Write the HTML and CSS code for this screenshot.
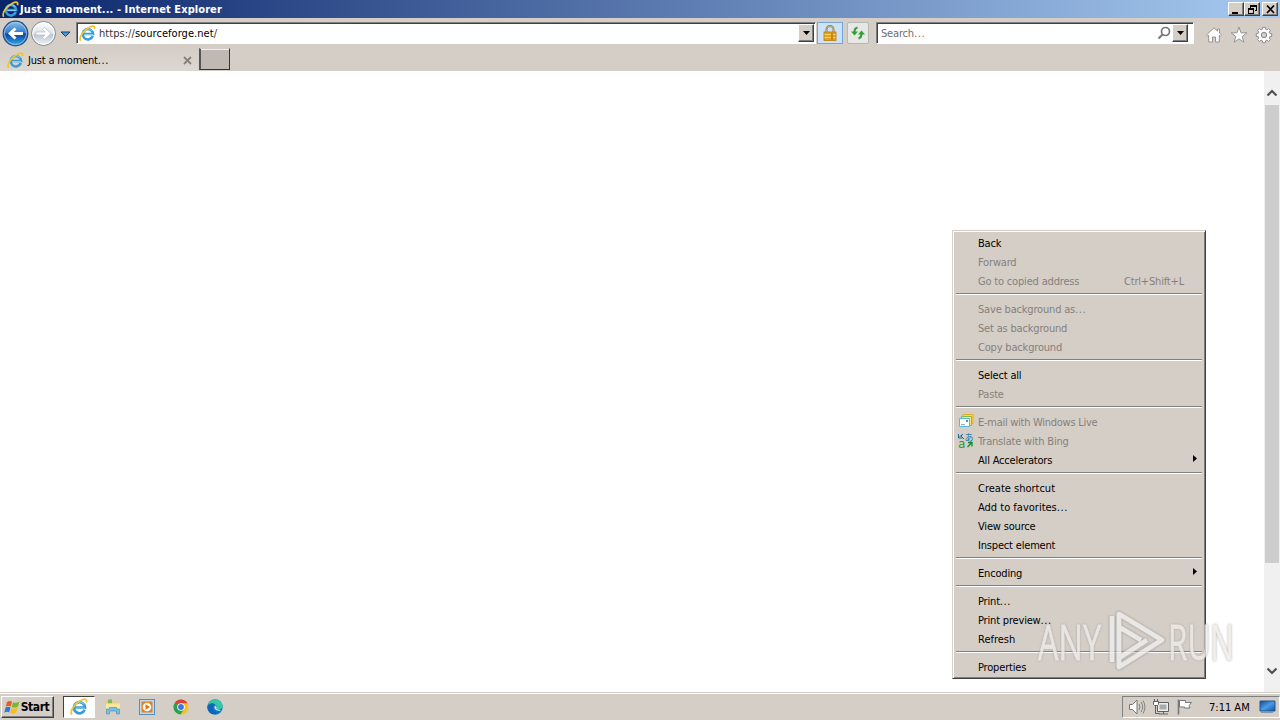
FILE: index.html
```html
<!DOCTYPE html>
<html lang="en">
<head>
<meta charset="utf-8">
<title>Just a moment... - Internet Explorer</title>
<link rel="stylesheet" href="styles.css">
</head>
<body>
<svg class="defs" width="0" height="0">
  <defs>
    <linearGradient id="blue" x1="0" y1="0" x2="0" y2="1"><stop offset="0" stop-color="#8fc1ec"/><stop offset=".48" stop-color="#2f78c8"/><stop offset=".52" stop-color="#0c4399"/><stop offset="1" stop-color="#35aeea"/></linearGradient>
    <linearGradient id="pale" x1="0" y1="0" x2="0" y2="1"><stop offset="0" stop-color="#fff"/><stop offset=".5" stop-color="#dde2e8"/><stop offset=".53" stop-color="#bcc4cf"/><stop offset="1" stop-color="#f3f6fa"/></linearGradient>
    <linearGradient id="screen" x1="0" y1="0" x2="1" y2="1"><stop offset="0" stop-color="#0b4c9f"/><stop offset=".5" stop-color="#4b9be4"/><stop offset="1" stop-color="#1350a8"/></linearGradient>
    <symbol id="ie" viewBox="0 0 16 16">
      <path d="M13 10.400A4.900 4.900 0 1 1 13.300 8.500H4.500" fill="none" stroke="#3a9bdc" stroke-width="2.400"/>
      <path d="M13.200 9H5M4.200 6.400A4.800 4.800 0 0 1 12.500 5.600" fill="none" stroke="#7fd0f5" stroke-width="1"/>
      <path d="M1.700 14.800C-.9 11.700 5 4.200 10.300 1.800c3.200-1.400 5.200-.7 4.200 2.200" fill="none" stroke="#f2c42c" stroke-width="1.600"/>
    </symbol>
  </defs>
</svg>
<div class="desktop">
  <header class="titlebar">
    <svg class="title-ie" width="17" height="17"><use href="#ie"/></svg>
    <h1 class="title">Just a moment... - Internet Explorer</h1>
    <div class="winbtns">
      <button class="winbtn"><svg width="13" height="11"><path d="M2 8h6v2H2z"/></svg></button><button class="winbtn"><svg width="13" height="11"><path d="M4 1h7v6H9V6h1V3H5v1H4zM2 4h6v6H2zM3 6v3h4V6z" fill-rule="evenodd"/></svg></button><button class="winbtn close"><svg width="13" height="11"><path d="M3 1.500l7 7.500M10 1.500l-7 7.500" stroke="#000" stroke-width="1.700"/></svg></button>
    </div>
  </header>

  <div class="navbar">
    <svg class="nav-arrows" width="74" height="29">
      <circle cx="15.500" cy="15.500" r="12.300" fill="url(#blue)" stroke="#234b85" stroke-width="1.200"/>
      <circle cx="15.500" cy="15.500" r="11" fill="none" stroke="#a7cdec" stroke-width=".8"/>
      <path d="M8 15.500l6.500-6 2 2-2.600 2.500H23v3h-9.100l2.600 2.500-2 2z" fill="#fff"/>
      <circle cx="43.500" cy="15.500" r="12" fill="url(#pale)" stroke="#858a93"/>
      <circle cx="43.500" cy="15.500" r="10.700" fill="none" stroke="#fff"/>
      <path d="M51 15.500l-6.500-6-2 2 2.600 2.500H36v3h9.100l-2.600 2.500 2 2z" fill="#fff" stroke="#b5bbc4" stroke-width=".7"/>
      <path d="M61 14h9l-4.500 4.500z" fill="#4d9bd6" stroke="#17406f"/>
    </svg>
    <div class="field address">
      <svg width="17" height="17"><use href="#ie"/></svg>
      <span class="url"><i>https://</i>sourceforge.net<i>/</i></span>
      <button class="drop"><svg width="9" height="5"><path d="M1 0h7L4.500 4z"/></svg></button>
    </div>
    <button class="tool lock"><svg width="16" height="18"><path d="M4.500 9V5.500a3.500 3.500 0 0 1 7 0V9" fill="none" stroke="#8d7848" stroke-width="2"/><path d="M4.500 9V5.500a3.500 3.500 0 0 1 7 0V9" fill="none" stroke="#d8caa0" stroke-width=".7"/><rect x="2" y="8" width="12" height="8.500" fill="#e3a21b" stroke="#b67b15" stroke-width=".8"/><path d="M2.500 10.500h11M2.500 13.500h11" stroke="#f8d25a"/><path d="M10 8.500v8" stroke="#c98411" stroke-width="2"/></svg></button>
    <button class="tool refresh"><svg width="16" height="16"><path d="M7.500 2.500C5 3 4.500 4.500 4.500 7M8.500 13.500c2.500-.5 3-2 3-4.500" fill="none" stroke="#2f9e35" stroke-width="2"/><path d="M1 6.500h7L4.500 10.500zM8 9.500h7L11.500 5.500z" fill="#2f9e35"/></svg></button>
    <div class="field search">
      <span class="hint">Search<span class="dots">...</span></span>
      <svg width="14" height="14"><circle cx="8.500" cy="5.500" r="4" fill="none" stroke="#777" stroke-width="1.700"/><path d="M5.500 8.500L1.500 12.500" stroke="#777" stroke-width="2"/></svg>
      <button class="drop"><svg width="9" height="5"><path d="M1 0h7L4.500 4z"/></svg></button>
    </div>
    <div class="commands">
      <svg width="18" height="18"><path d="M1.500 9L9 1.800l3.500 3.300V3h2v4l2 2-1.200 1.200-1-.9v6.700h-3.800V11h-3v5H3.700V9.300l-1 .9z" fill="#fff" stroke="#8b8b8b" stroke-width=".9"/></svg>
      <svg width="18" height="18"><path d="M9 1.200l2 5.600 5.900.1-4.700 3.600 1.700 5.700L9 12.900l-4.900 3.300 1.700-5.700L1.100 6.900 7 6.800z" fill="#fff" stroke="#8b8b8b" stroke-width=".9"/></svg>
      <svg width="18" height="18"><path d="M7.700 1.300h2.600l.3 1.900 1.300.6 1.700-1.200 1.800 1.800-1.200 1.700.6 1.300 1.900.3v2.600l-1.900.3-.6 1.300 1.200 1.700-1.800 1.800-1.700-1.200-1.300.6-.3 1.900H7.700l-.3-1.900-1.300-.6-1.700 1.200-1.800-1.800 1.200-1.700-.6-1.300-1.900-.3V7.700l1.900-.3.600-1.300-1.200-1.700 1.800-1.800 1.700 1.200 1.300-.6z" fill="#fff" stroke="#858585" stroke-width=".9"/><circle cx="9" cy="9" r="2.700" fill="#d5cec7" stroke="#858585"/></svg>
    </div>
  </div>

  <div class="tabs">
    <div class="tab">
      <svg width="17" height="17"><use href="#ie"/></svg>
      <span class="tab-name">Just a moment<span class="dots">...</span></span>
      <svg width="9" height="9"><path d="M1 1l7 7M8 1L1 8" stroke="#858079" stroke-width="1.800"/></svg>
    </div>
    <div class="newtab"></div>
  </div>

  <main class="page">
    <div class="scrollbar">
      <svg class="up" width="16" height="12"><path d="M3.500 8.500L8 4l4.500 4.500" fill="none" stroke="#505050" stroke-width="2.200"/></svg>
      <div class="thumb"></div>
      <svg class="down" width="16" height="12"><path d="M3.500 3.500L8 8l4.500-4.500" fill="none" stroke="#505050" stroke-width="2.200"/></svg>
    </div>
  </main>

  <footer class="taskbar">
    <button class="start"><svg width="17" height="17"><path d="M3 3c2-1.500 3.500-1.200 5-.3L6.800 7.500C5.300 6.600 3.700 6.600 1.800 7.700z" fill="#e75b25"/><path d="M9 3.200c2 1 4 .8 6.500-.6L14 7.500c-2 1.400-4.200 1.400-6.200.4z" fill="#7ab72e"/><path d="M1.500 8.700c2-1.200 3.500-1 5-.2l-1.300 5C3.800 12.500 2.200 12.600.3 13.700z" fill="#2a7ad2"/><path d="M7.500 9c2 1 4 .9 6.300-.4l-1.400 5c-2.200 1.400-4.200 1.300-6.200.3z" fill="#f7bd20"/></svg>Start</button>
    <div class="task active"><svg width="18" height="18"><use href="#ie"/></svg></div>
    <div class="task"><svg width="18" height="18"><path d="M2 3h6l1 1.500h6V13H2z" fill="#eccb64"/><path d="M4 1.500h4v4H4z" fill="#7fba58"/><path d="M2 5.500h14v6H2z" fill="#f8e7a0"/><path d="M2.500 16v-5h3V9.500h7V11h3v5h-3v-3h-7v3z" fill="#79bfdf" stroke="#4c98c0" stroke-width=".7"/></svg></div>
    <div class="task"><svg width="18" height="18"><rect x="1.500" y="1.500" width="15" height="15" fill="#b9dcf4" stroke="#4c91c9"/><rect x="3.500" y="3.500" width="11" height="11" fill="#ee7d12"/><circle cx="9" cy="9" r="4.300" fill="#fff"/><path d="M7.500 6.200v5.600L12 9z" fill="#ec6d08"/></svg></div>
    <div class="task"><svg width="18" height="18"><circle cx="9" cy="9" r="7.500" fill="#f5c21c"/><path d="M9 9L2.500 5.200A7.500 7.500 0 0 1 15.500 5.200H9z" fill="#df4032"/><path d="M9 9L2.500 5.200A7.500 7.500 0 0 0 8.500 16.500L12 11z" fill="#27a052"/><circle cx="9" cy="9" r="3.800" fill="#fff"/><circle cx="9" cy="9" r="2.900" fill="#3c78df"/></svg></div>
    <div class="task"><svg width="18" height="18"><circle cx="9" cy="9" r="7.700" fill="#087bc8"/><path d="M1.800 7C3.500-.2 14.500-.5 16.500 7c.7 3-1.500 4.500-4 4.500-2 0-2.500-1-1.700-2C11 5.500 6 4.500 1.800 7z" fill="#38c7a4"/><path d="M1.400 8.500C3 5 7 4.500 9 6.500 5.500 7.500 6 13.500 12 14.500c-5 4-11 0-10.600-6z" fill="#1064b7"/><path d="M9.200 7.500c-2 2.500 0 6 5.800 5L12.500 11.500c-2 0-2.600-1-1.700-2.200z" fill="#d5e5e7"/></svg></div>
    <div class="tray">
      <svg class="speaker" width="18" height="18"><path d="M1.500 6.500h3L9 2v14l-4.500-4.500h-3z" fill="#fff" stroke="#777"/><path d="M11 6q2 3 0 6M13 4q3.500 5 0 10M15 2.500q4 6.500 0 13" fill="none" stroke="#777" stroke-width=".9"/></svg>
      <svg class="net" width="18" height="18"><path d="M5.500 4.500h11v9h-11z" fill="#eee" stroke="#5e5e5e"/><path d="M7.500 6.500h7v5h-7z" fill="#aaa"/><path d="M7 16h9M11.500 14v2" stroke="#666"/><path d="M3.500 7v8.500h4" fill="none" stroke="#5e5e5e"/><path d="M1.500 3.500h5v3l-1 1h-3l-1-1zM2.500 1v2.500M5.500 1v2.500" fill="#fff" stroke="#5e5e5e"/></svg>
      <svg class="flag" width="18" height="18"><path d="M2.500 1.500v15" stroke="#777" stroke-width="1.600"/><path d="M3.500 2.500h6v2h6l-2.500 3 1 2.500H8.500v-1h-5z" fill="#fff" stroke="#777"/></svg>
      <span class="clock">7:11 AM</span>
      <svg class="show" width="17" height="14"><path d="M1 1h15v10H1z" fill="url(#screen)" stroke="#20558f"/><path d="M2 12.500h12" stroke="#8296ab"/></svg>
    </div>
  </footer>
</div>

<nav class="menu">
  <div class="item">Back</div>
  <div class="item off">Forward</div>
  <div class="item off">Go to copied address<span class="key">Ctrl+Shift+L</span></div>
  <hr>
  <div class="item off"><span>Save background as<span class="dots">...</span></span></div>
  <div class="item off">Set as background</div>
  <div class="item off">Copy background</div>
  <hr>
  <div class="item">Select all</div>
  <div class="item off">Paste</div>
  <hr>
  <div class="item off"><svg class="micon" width="16" height="16"><path d="M5 1.500h10v9H5z" fill="#f9d75c" stroke="#e0b020"/><path d="M3.500 3.500h10v9h-10z" fill="#f8e48c" stroke="#8aba42"/><path d="M1.500 5.500h10v8h-10z" fill="#fff" stroke="#55b6e8"/><path d="M3 11.500h4" stroke="#9ab0bf"/><path d="M8 7h2v2H8z" fill="#4b91cb"/></svg><span class="tight">E-mail with Windows Live</span></div>
  <div class="item off"><svg class="micon glyphs" width="18" height="18"><path d="M1.500 2v4h4M2 5.500l3-3M6 2l-2 2 3 3" fill="none" stroke="#27699c"/><text x="7.500" y="8.500" fill="#1676a7">あ</text><text class="a" x="1" y="16" fill="#1d9c35">a</text><path d="M11 10.500h4v4M10.500 15l4.500-4.500" fill="none" stroke="#16852d" stroke-width="1.300"/></svg>Translate with Bing</div>
  <div class="item">All Accelerators<svg class="sub" width="5" height="8"><path d="M0 0v7l4-3.500z"/></svg></div>
  <hr>
  <div class="item wide">Create shortcut</div>
  <div class="item wide"><span>Add to favorites<span class="dots">...</span></span></div>
  <div class="item">View source</div>
  <div class="item">Inspect element</div>
  <hr>
  <div class="item">Encoding<svg class="sub" width="5" height="8"><path d="M0 0v7l4-3.500z"/></svg></div>
  <hr>
  <div class="item"><span>Print<span class="dots">...</span></span></div>
  <div class="item"><span>Print preview<span class="dots">...</span></span></div>
  <div class="item wide">Refresh</div>
  <hr>
  <div class="item">Properties</div>
</nav>

<svg class="watermark" width="204" height="66">
  <g class="brand"><text x="1" y="52" textLength="63" lengthAdjust="spacingAndGlyphs">ANY</text><text x="131" y="52" textLength="66" lengthAdjust="spacingAndGlyphs">RUN</text></g>
  <path class="edge" d="M82 50V6l43 26-43 27V50l28-18M75 8v46M82 19l22 13"/>
  <path class="mark" d="M82 50V6l43 26-43 27V50l28-18M75 8v46M82 19l22 13"/>
</svg>
</body>
</html>
```
FILE: styles.css
```css
* { box-sizing: border-box; }
body { margin: 0; overflow: hidden; font: 11px/14px "DejaVu Sans Condensed", "DejaVu Sans", sans-serif; font-stretch: condensed; letter-spacing: -0.18px; color: #000; background: #fff; }
svg { display: block; flex: none; }
button { font: inherit; letter-spacing: inherit; padding: 0; border: 0; display: flex; align-items: center; justify-content: center; background: #d5cec7; color: #000; }
.defs { position: absolute; }
.dots { letter-spacing: 0.6px; }
.desktop { width: 1280px; height: 720px; display: flex; flex-direction: column; }
.titlebar { height: 18px; display: flex; align-items: center; padding: 0 2px; background: linear-gradient(90deg, #0a246a, #a6caf0); flex: none; }
.title { margin: 0 0 0 1px; padding-top: 1px; font-size: 11px; line-height: 17px; font-weight: bold; color: #fff; letter-spacing: 0.08px; flex: 1; white-space: nowrap; }
.winbtns { display: flex; }
.winbtn { width: 16px; height: 14px; border: 1px solid; border-color: #fff #404040 #404040 #fff; box-shadow: inset -1px -1px #808080; }
.close { margin-left: 2px; }
.navbar { height: 30px; flex: none; display: flex; align-items: flex-start; background: #d5cec7; }
.nav-arrows { margin-right: 2px; }
.field { height: 22px; margin-top: 4px; display: flex; align-items: center; background: #fff; border: 1px solid; border-color: #808080 #fff #fff #808080; box-shadow: inset 1px 1px #404040; }
.address { width: 740px; padding: 0 1px 0 2px; }
.url { margin-left: 3px; padding-top: 2px; flex: 1; letter-spacing: 0.05px; }
.url i { font-style: normal; color: #333; }
.drop { width: 16px; height: 18px; border: 1px solid; border-color: #fff #404040 #404040 #fff; box-shadow: inset -1px -1px #808080; }
.tool { height: 22px; margin-top: 4px; border: 1px solid #b5b7b4; border-radius: 2px; background: #e7e8e5; }
.lock { width: 26px; margin-left: 1px; border-color: #73a7dc; background: #cce2f8; border-radius: 0; }
.refresh { width: 22px; margin-left: 4px; }
.search { width: 318px; margin-left: 7px; padding: 0 4px 0 4px; }
.hint { color: #6d6d6d; flex: 1; padding-top: 2px; }
.search .drop { margin-left: 1px; margin-right: 1px; }
.commands { display: flex; gap: 7px; padding: 8px 0 0 11px; }
.tabs { height: 23px; flex: none; display: flex; background: #d5cec7; }
.tab { width: 198px; display: flex; align-items: center; padding: 1px 6px 0 7px; background: linear-gradient(#d5cec7, #dcd7d1); }
.tab-name { margin-left: 4px; padding-top: 1px; flex: 1; }
.newtab { width: 31px; height: 22px; background: #c0b9b3; border: 1px solid; border-color: #d5cec7 #333 #333 #555; border-left-width: 2px; margin-left: 1px; box-shadow: inset 0 1px #eee; }
.page { flex: 1; display: flex; justify-content: flex-end; background: #fff; }
.scrollbar { width: 16px; background: #f0f0f0; display: flex; flex-direction: column; padding: 16px 0 15px; }
.thumb { height: 458px; width: 14px; margin: 6px 1px 0; background: #cdcdcd; }
.down { margin-top: auto; }
.taskbar { height: 28px; flex: none; display: flex; align-items: flex-start; padding: 3px 0 0 1px; background: #d5cec7; border-top: 1px solid #d5cec7; box-shadow: inset 0 1px #fff; }
.start { width: 53px; height: 22px; border: 1px solid; border-color: #fff #404040 #404040 #fff; box-shadow: inset -1px -1px #808080; font-weight: bold; font-size: 12px; letter-spacing: -0.4px; padding-right: 2px; }
.task { width: 34px; height: 22px; display: flex; align-items: center; justify-content: center; }
.active { width: 32px; margin: 0 1px 0 9px; background: #fff; border: 1px solid; border-color: #404040 #fff #fff #404040; }
.tray { margin-left: auto; width: 158px; height: 22px; border: 1px solid; border-color: #808080 #fff #fff #808080; display: flex; align-items: center; padding-left: 5px; }
.net, .flag { margin-left: 6px; }
.clock { margin-left: 15px; width: 50px; padding-top: 1px; white-space: nowrap; letter-spacing: 0; }
.menu { position: absolute; left: 952px; top: 230px; width: 254px; height: 449px; padding: 3px 2px 2px; background: #d5cec7; border: 1px solid; border-color: #d5cec7 #404040 #404040 #d5cec7; box-shadow: inset 1px 1px #fff, inset -1px -1px #808080; }
.item { height: 19px; line-height: 20px; padding: 0 19px 0 23px; display: flex; justify-content: space-between; position: relative; white-space: nowrap; }
.wide { letter-spacing: 0; }
.tight { letter-spacing: -0.27px; }
.off { color: #85807b; }
.menu hr { height: 2px; margin: 2px 1px 5px; border: 0; border-top: 1px solid #808080; border-bottom: 1px solid #fff; }
.micon { position: absolute; left: 3px; top: 0; }
.glyphs { left: 2px; }
.glyphs text { font: 9px "Noto Sans CJK JP", sans-serif; }
.glyphs .a { font-size: 13px; }
.sub { position: absolute; right: 5px; top: 4px; }
.watermark { position: absolute; left: 1037px; top: 608px; opacity: .8; filter: drop-shadow(0 0 1px #999); }
.brand { font: 50px "Open Sans", sans-serif; letter-spacing: 0; fill: #eeebe8; stroke: #eeebe8; stroke-width: .8; }
.edge { fill: none; stroke: #bbb; stroke-width: 6; stroke-linejoin: round; }
.mark { fill: none; stroke: #f0eeec; stroke-width: 4.500; stroke-linejoin: round; }
```
